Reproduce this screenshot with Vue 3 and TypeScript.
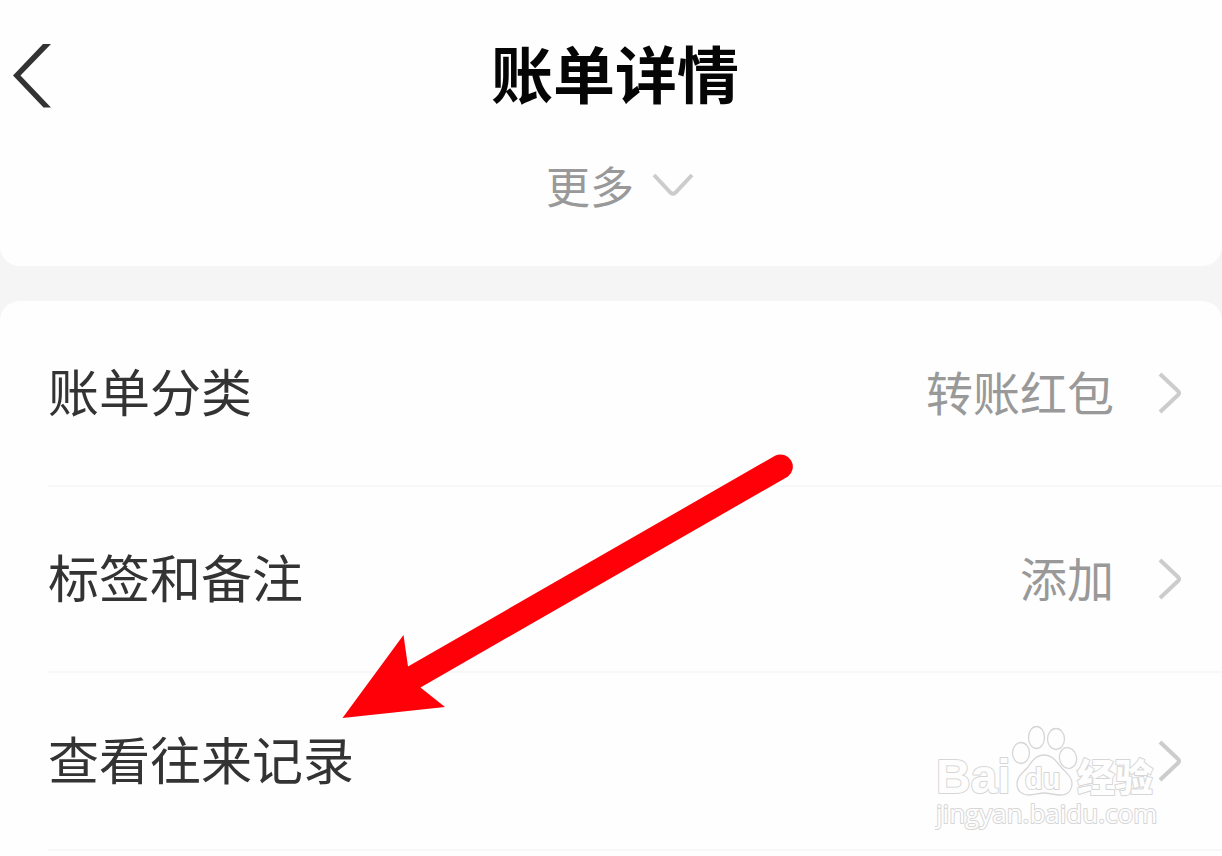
<script setup lang="ts">
interface DetailRow {
  id: string
  label: string
  value?: string
}

const rows: DetailRow[] = [
  { id: 'category', label: '账单分类', value: '转账红包' },
  { id: 'notes', label: '标签和备注', value: '添加' },
  { id: 'history', label: '查看往来记录' },
]
</script>

<template>
  <div class="page">
    <header class="card head">
      <div class="bar">
        <button class="back" type="button" aria-label="返回">
          <svg width="38" height="64" viewBox="0 0 38 64" aria-hidden="true">
            <path d="M0 31.5 30 0H38L7.5 31.5 38 63.5H30.5Z" fill="#333" />
          </svg>
        </button>
        <h1 class="title">账单详情</h1>
      </div>
      <button class="more" type="button">
        <span>更多</span>
        <svg width="42" height="24" viewBox="0 0 42 24" aria-hidden="true">
          <path d="M2 2 18.5 19.5Q21 22 23.5 19.5L40 2" fill="none" stroke="#ccc" stroke-width="4" />
        </svg>
      </button>
    </header>

    <main class="card body">
      <ul class="list">
        <li v-for="row in rows" :key="row.id" class="item">
          <button class="row" type="button">
            <span class="label">{{ row.label }}</span>
            <span v-if="row.value" class="value">{{ row.value }}</span>
            <svg class="chevron" width="24" height="42" viewBox="0 0 24 42" aria-hidden="true">
              <path d="M2 2 20 19Q22 21 20 23L2 40" fill="none" stroke="#ccc" stroke-width="4" />
            </svg>
          </button>
        </li>
      </ul>

      <svg class="arrow" width="452" height="266" viewBox="0 0 452 266" aria-hidden="true">
        <path
          d="M-.5 265 60.500 182 65 213.500 432.500 2.500A12.300 12.300 0 0 1 445 23.500L77.500 234.500 102 254Z"
          fill="#ff0008"
        />
      </svg>

      <svg class="watermark" width="224" height="108" viewBox="0 0 224 108" role="img" aria-label="Baidu经验">
        <g fill="#fefefe" stroke="#d6d6d6" stroke-width="1.300">
          <ellipse cx="86" cy="31" rx="8.500" ry="10.500" />
          <ellipse cx="101.500" cy="15.500" rx="8" ry="11" />
          <ellipse cx="121" cy="17" rx="8.500" ry="10.500" />
          <ellipse cx="133" cy="36" rx="8.500" ry="10.500" transform="rotate(-12 133 36)" />
          <path
            d="M109 33C101 33 97 39 93 45 88 51 82 54 82 62 82 69 87 73 94 73 100 73 104 71 109 71 115 71 119 73 125 73 132 73 137 69 137 61 137 54 130 50 126 45 121 39 117 33 109 33Z"
          />
        </g>
        <g class="mark">
          <text x="1" y="71" class="latin">Bai</text>
          <text x="90" y="67" class="du">du</text>
          <text x="142" y="69" class="hanzi">经验</text>
          <text x="1" y="101" class="host">jingyan.baidu.com</text>
        </g>
      </svg>
    </main>
  </div>
</template>

<style>
body {
  margin: 0;
  background: #f5f5f5;
}
</style>

<style scoped>
.page {
  display: flex;
  flex-direction: column;
  gap: 35px;
  min-height: 100vh;
  overflow: hidden;
  background: #f5f5f5;
  font-family: "Noto Sans CJK SC", sans-serif;
}

button {
  padding: 0;
  border: 0;
  background: none;
  font: inherit;
  color: inherit;
  cursor: pointer;
}

svg {
  display: block;
}

.card {
  background: #fefefe;
}

.head {
  display: flex;
  flex-direction: column;
  align-items: center;
  gap: 30px;
  padding: 30px 0 48px;
  border-radius: 0 0 20px 20px;
}

.bar {
  display: grid;
  grid-template-columns: 1fr auto 1fr;
  align-items: center;
  width: 100%;
  height: 92px;
}

.back {
  justify-self: start;
  padding-left: 13px;
}

.title {
  margin: 0;
  padding: 0 0 8px 8px;
  font-size: 62px;
  line-height: 84px;
  font-weight: 700;
  color: #050505;
}

.more {
  display: flex;
  align-items: center;
  gap: 18px;
  padding-left: 18px;
  font-size: 44px;
  line-height: 66px;
  color: #999;
}

.body {
  position: relative;
  flex: 1;
  border-radius: 20px 20px 0 0;
}

.list {
  margin: 0;
  padding: 0 0 0 48px;
  list-style: none;
}

.item {
  border-bottom: 2px solid #f8f8f8;
}

.row {
  display: flex;
  align-items: center;
  width: 100%;
  height: 184px;
  padding-right: 40px;
  text-align: left;
}

.item:last-child .row {
  height: 176px;
}

.label {
  flex: 1;
  padding-bottom: 6px;
  font-size: 51px;
  line-height: 76px;
  color: #333;
}

.value {
  margin-right: 44px;
  padding-bottom: 4px;
  font-size: 47px;
  line-height: 70px;
  color: #999;
}

.arrow {
  position: absolute;
  top: 152px;
  left: 343px;
  overflow: visible;
  pointer-events: none;
}

.watermark {
  position: absolute;
  top: 421px;
  right: 63px;
  pointer-events: none;
}

.mark {
  fill: #fefefe;
  stroke: #d6d6d6;
  stroke-width: 2px;
  stroke-linejoin: round;
  paint-order: stroke;
}

.latin {
  font: 700 48px "Liberation Sans", sans-serif;
}

.du {
  font: 700 29px "Liberation Sans", sans-serif;
}

.hanzi {
  font: 900 38px "Noto Sans CJK SC", sans-serif;
}

.host {
  font: 400 26px "Open Sans", sans-serif;
}
</style>
